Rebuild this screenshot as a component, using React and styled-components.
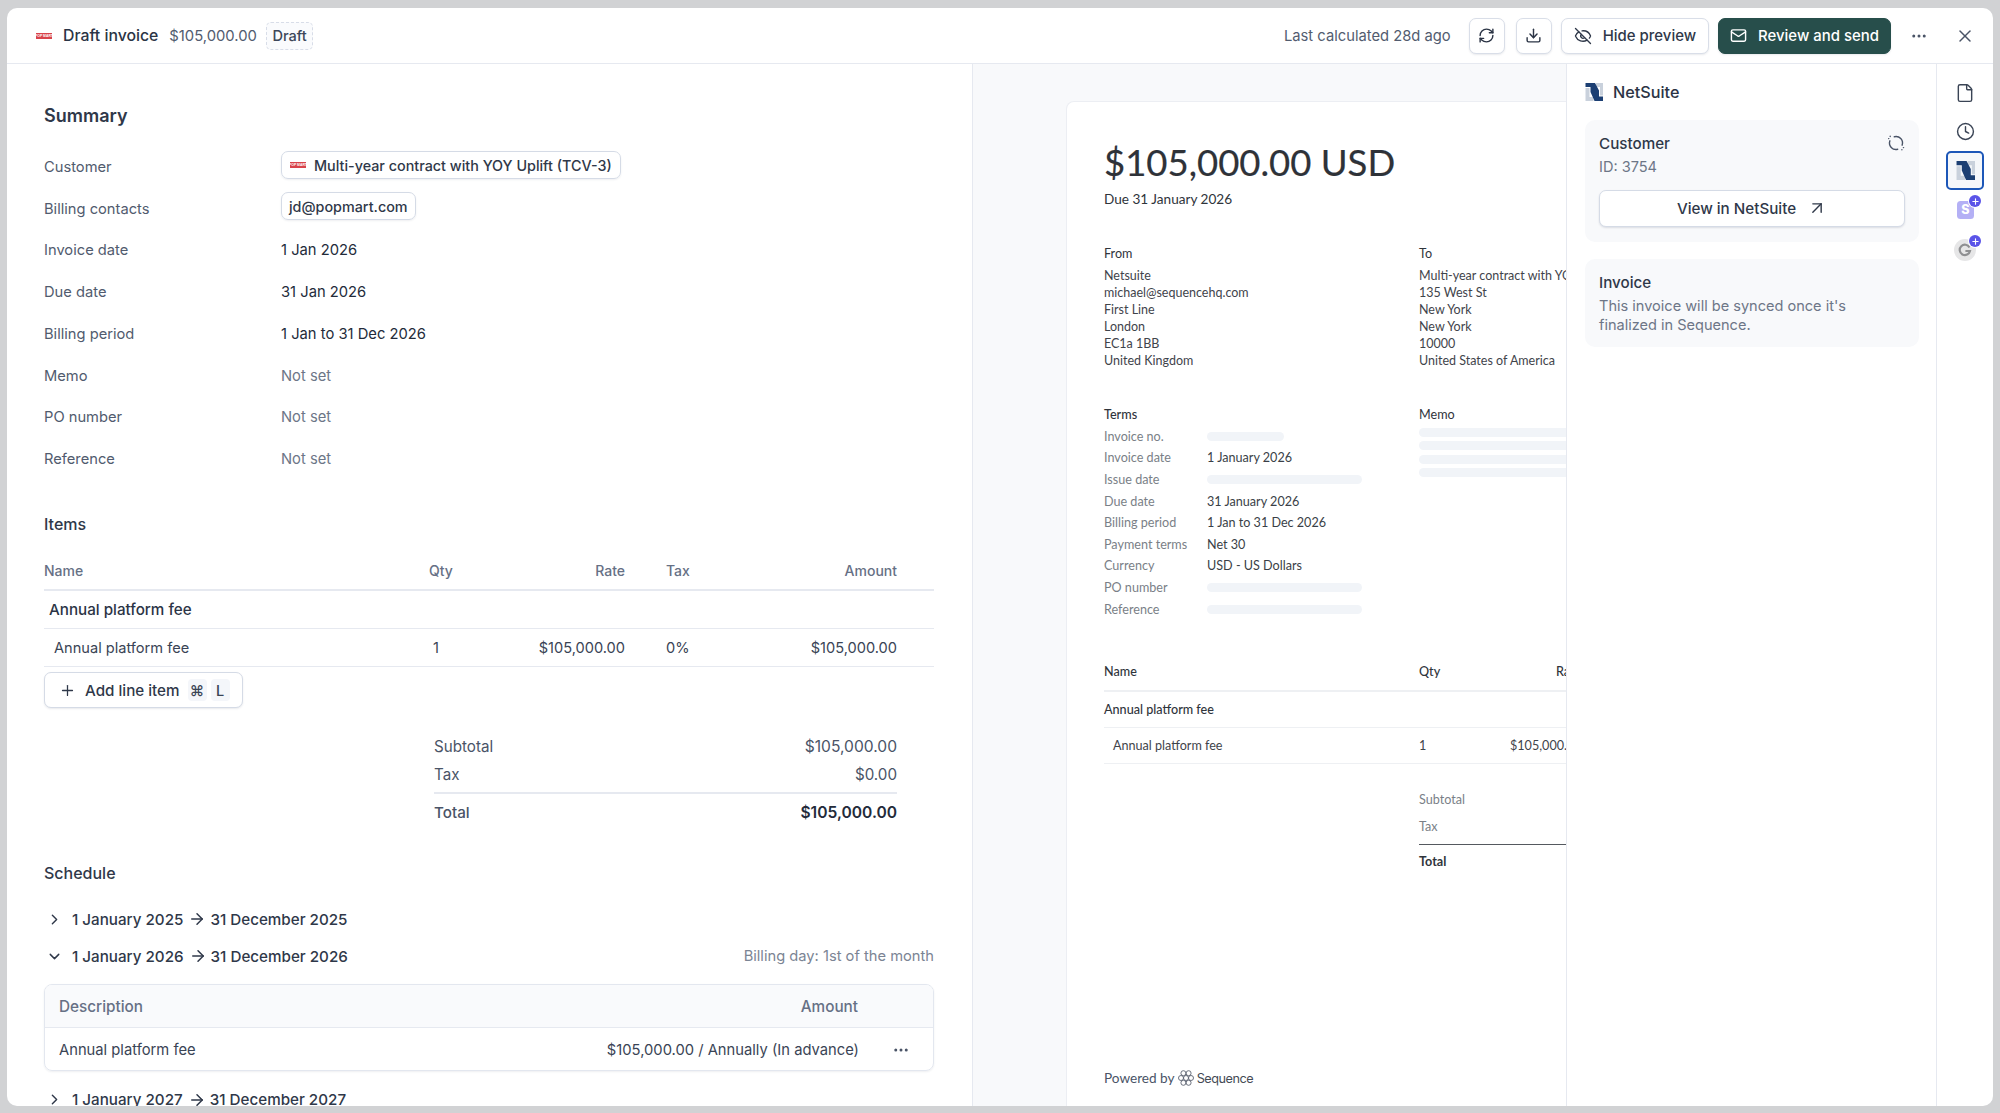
import React from 'react';
import styled, { createGlobalStyle } from 'styled-components';
import { RefreshCw, Download, EyeOff, Mail, Ellipsis, X, File, Clock, ArrowUpRight, ChevronRight, ChevronDown, ArrowRight, Plus } from 'lucide-react';

const Global = createGlobalStyle`
  html, body { margin: 0; padding: 0; background: #d1d2d4; }
  body { font-family: Inter, "Liberation Sans", sans-serif; color: #2b3445; -webkit-font-smoothing: antialiased; }
  * { box-sizing: border-box; }
`;

const Page = styled.div`
  width: 2000px; height: 1113px; padding: 8px 7px 7px 7px; overflow: hidden;
`;
const Panel = styled.div`
  height: 100%; background: #fff; border-radius: 10px; overflow: hidden; display: flex; flex-direction: column;
`;
const Header = styled.header`
  height: 56px; flex: none; display: flex; align-items: center; border-bottom: 1px solid #e6e9f0;
  padding: 0 18px 0 29px;
`;
const TitleText = styled.span`
  font-size: 15.8px; font-weight: 500; color: #2b3445; margin-left: 11px;
`;
const TitleAmount = styled.span`
  font-size: 14.8px; color: #525c6f; margin-left: 11px;
`;
const DraftTag = styled.span`
  height: 28px; padding: 0 5.5px; margin-left: 9px; display: inline-flex; align-items: center;
  border: 1.5px dashed #d8dde8; border-radius: 5px; background: #fafbfd;
  font-size: 14.6px; font-weight: 500; color: #3d4759;
`;
const Spacer = styled.div`flex: 1;`;
const LastCalc = styled.span`
  font-size: 14.75px; color: #525c6f; margin-right: 18px;
`;
const IconButton = styled.button`
  width: 36px; height: 36px; padding: 0; margin-right: ${p => p.$mr}px; display: flex; align-items: center; justify-content: center;
  background: #fff; border: 1px solid #d9dee8; border-radius: 7px; box-shadow: 0 1px 2px rgba(40,50,80,.1); color: #2b3445;
`;
const TextButton = styled.button`
  height: 36px; padding: 0 ${p => p.$px || 11}px; display: flex; align-items: center; gap: 11px; margin-right: ${p => p.$mr || 0}px;
  background: ${p => p.$primary ? '#274e4b' : '#fff'};
  border: 1px solid ${p => p.$primary ? '#274e4b' : '#d9dee8'};
  border-radius: 7px; box-shadow: 0 1px 2px rgba(40,50,80,.1);
  color: ${p => p.$primary ? '#fff' : '#2f3849'};
  font: 500 14.95px Inter, sans-serif;
`;
const PlainIcon = styled.span`
  display: flex; color: ${p => p.$color || '#4a5467'}; margin: ${p => p.$m || 0};
`;

const Body = styled.div`
  flex: 1; min-height: 0; display: flex;
`;
const Main = styled.main`
  width: 966px; flex: none; padding: 40px 38px 0 37px; border-right: 1px solid #e6e9f0; overflow: hidden;
`;
const H1 = styled.h2`
  margin: 0; font-size: 18px; line-height: 24px; font-weight: 600; color: #2f3849;
`;
const H2 = styled.h3`
  margin: ${p => p.$mt}px 0 0; font-size: 16px; line-height: 22px; font-weight: 500; color: #2f3849;
`;
const SummaryGrid = styled.div`
  margin-top: 18px; display: grid; grid-template-columns: 237px 1fr; grid-auto-rows: 41.75px; align-items: center;
`;
const Label = styled.div`
  font-size: 14.7px; color: #515b6e;
`;
const Value = styled.div`
  font-size: 14.75px; color: ${p => p.$muted ? '#6d7687' : '#232b3a'};
`;
const Pill = styled.span`
  height: 28px; padding: 0 ${p => p.$px || 8}px; display: inline-flex; align-items: center; gap: 8px;
  border: 1px solid #d5dbe6; border-radius: 7px; box-shadow: 0 1px 2px rgba(40,50,80,.08);
  font-size: 14.35px; font-weight: 500; color: #2f3849;
  margin-top: -5px;
`;

const ItemsTable = styled.div`
  margin-top: 17px;
`;
const ItemRow = styled.div`
  display: grid; grid-template-columns: 385px 90px 106px 100px 1fr; align-items: center;
  height: ${p => p.$h}px; border-bottom: ${p => p.$thick ? '2px' : '1px'} solid #e6e9f0;
  font-size: ${p => p.$head ? 14 : 14.6}px; color: ${p => p.$head ? '#667085' : '#3a4455'};
  font-weight: ${p => (p.$head || p.$bold) ? 500 : 400};
  ${p => p.$bold ? 'color:#2b3445;font-size:15.2px;' : ''}
`;
const Cell = styled.div`
  text-align: ${p => p.$right ? 'right' : 'left'};
  padding-left: ${p => p.$pl || 0}px; padding-right: ${p => p.$pr || 0}px;
`;
const AddButton = styled.button`
  margin-top: 5px; height: 36px; width: 199px; padding: 0 0 0 14px; display: flex; align-items: center;
  background: #fff; border: 1px solid #d5dbe6; border-radius: 7px; box-shadow: 0 1px 2px rgba(40,50,80,.1);
  font: 500 15.2px Inter, sans-serif; color: #2f3849;
`;
const AddLabel = styled.span`margin-left: 9px;`;
const Kbd = styled.kbd`
  width: 19px; height: 22px; margin-left: ${p => p.$ml}px; display: inline-flex; align-items: center; justify-content: center;
  background: #f4f6fa; border-radius: 4px; font: 500 14.5px Inter, "DejaVu Sans", sans-serif; color: #3a4455;
`;
const Totals = styled.div`
  margin: 24px 37px 0 390px;
`;
const TotalRow = styled.div`
  height: ${p => p.$h}px; display: flex; justify-content: space-between; align-items: center;
  font-size: ${p => p.$bold ? 15.6 : 15.2}px; color: ${p => p.$bold ? '#232b3a' : '#4a5467'}; font-weight: ${p => p.$bold ? 600 : 400};
  ${p => p.$line ? 'border-top: 2px solid #e6e9f0; margin-top: 4px; padding-top: 2px;' : ''}
`;
const SubtotalAmount = styled.span`font-size: 15.6px;`;
const TotalLabel = styled.span`font-weight: ${p => p.$b ? 500 : 400}; font-size: 15.2px; color: #4a5467;`;
const Period = styled.div`
  height: 37px; display: flex; align-items: center; font-size: 15.2px; font-weight: 500; color: #2f3849; padding-left: 2px;
  margin-top: ${p => p.$mt || 0}px;
`;
const DateArrow = styled.span`display: inline-flex; margin: 0 4px 0 5px; color: #2f3849;`;
const BillingDay = styled.span`margin-left: auto; font-size: 14.7px; font-weight: 400; color: #7b8494;`;
const ChevronSlot = styled.span`display: flex; width: 26px; color: #2f3849;`;
const SchedCard = styled.div`
  margin-top: 9.5px; height: 87px; border: 1px solid #e3e7ef; border-radius: 8px; overflow: hidden;
  box-shadow: 0 1px 2px rgba(40,50,80,.08);
`;
const SchedHead = styled.div`
  height: 43px; background: #f9fafc; border-bottom: 1px solid #e6e9f0; display: flex; justify-content: space-between; align-items: center;
  padding: 0 75px 0 14px; font-size: 15.3px; font-weight: 500; color: #667085;
`;
const SchedRow = styled.div`
  height: 43px; display: flex; align-items: center; padding: 0 23px 0 14px; font-size: 14.75px; color: #3a4455;
`;
const SchedAmt = styled.span`margin-left: auto; margin-right: 33px;`;

const Preview = styled.section`
  width: 593px; flex: none; background: #f8f9fb; overflow: hidden; padding: 37px 0 0 93px; display: flex;
`;
const Paper = styled.div`
  width: 800px; flex: none; background: #fff; border: 1px solid #eceef3; border-bottom: 0; border-radius: 8px 8px 0 0; padding: 36px 36px 18px 37px;
  display: flex; flex-direction: column; font-family: Lato, sans-serif; color: #3a3f47; font-size: 12.6px;
`;
const BigAmount = styled.div`
  font-size: 36.5px; line-height: 48px; color: #2e3238; white-space: nowrap; -webkit-text-stroke: 0.2px #2e3238;
`;
const DueLine = styled.div`
  margin-top: 3px; font-size: 13.6px; line-height: 20px; color: #2f343b;
`;
const PaperTwo = styled.div`
  display: grid; grid-template-columns: 315px 1fr; margin-top: ${p => p.$mt}px;
`;
const PaperHeading = styled.div`
  font-size: 12.6px; line-height: 17px; color: #2f343b; font-weight: ${p => p.$b ? 500 : 400};
`;
const AddressLines = styled.div`
  margin-top: 5px; line-height: 17.1px; white-space: nowrap; font-size: 12.5px; color: #3f444b;
`;
const TermsGrid = styled.div`
  margin-top: 3px; display: grid; grid-template-columns: 103px 1fr; grid-auto-rows: 21.6px; align-items: center; white-space: nowrap;
`;
const TermLabel = styled.div`color: #7a7f87;`;
const Skeleton = styled.div`
  height: 9px; border-radius: 5px; background: #f1f4f8; width: ${p => p.$w}px;
`;
const MemoLines = styled.div`
  margin-top: 5px; display: grid; gap: 4.6px;
`;
const PaperRow = styled.div`
  display: grid; grid-template-columns: 315px 91px 170px; align-items: center; height: ${p => p.$h}px;
  border-bottom: ${p => p.$thick ? 2 : 1.5}px solid #eef0f3; white-space: nowrap;
  color: ${p => p.$strong ? '#2f343b' : '#3f444b'}; font-weight: ${p => p.$strong ? 500 : 400};
  margin-top: ${p => p.$mt || 0}px;
`;
const PaperCell = styled.div`
  margin-left: ${p => p.$ml || 0}px;
`;
const PaperTotals = styled.div`margin: 22px 0 0 315px; `;
const PaperTotal = styled.div`
  height: ${p => p.$h}px; display: flex; align-items: center; color: ${p => p.$strong ? '#2f343b' : '#7a7f87'}; font-weight: ${p => p.$strong ? 700 : 400};
  ${p => p.$line ? 'border-top: 1.5px solid #55595f; margin-top: 4px;' : ''}
`;
const Powered = styled.div`
  margin-top: auto; height: 20px; display: flex; align-items: center; font-size: 13.6px; color: #4a5467;
`;
const SeqName = styled.span`
  font-family: Inter, sans-serif; font-size: 12.7px; letter-spacing: -0.5px; color: #444b55; margin-left: 3px;
`;

const Side = styled.aside`
  width: 371px; flex: none; border-left: 1px solid #e6e9f0; padding: 18px 18px 0 18px;
`;
const SideTitle = styled.div`
  height: 20px; display: flex; align-items: center; gap: 10px; font-size: 16.2px; font-weight: 500; color: #2b3445;
`;
const SideCard = styled.div`
  margin-top: ${p => p.$mt}px; height: ${p => p.$h}px; background: #f8f9fb; border-radius: 10px; padding: 12px 14px 0;
`;
const CardTitleRow = styled.div`
  display: flex; justify-content: space-between; align-items: center; height: 22px;
  font-size: 15.2px; font-weight: 500; color: #2f3849;
`;
const CardText = styled.div`
  margin-top: ${p => p.$mt || 0}px; font-size: 14.55px; line-height: 18.5px; color: #6d7687;
`;
const WideButton = styled.button`
  margin-top: 13px; width: 100%; height: 37px; display: flex; align-items: center; justify-content: center; gap: 11px;
  background: #fff; border: 1px solid #d5dbe6; border-radius: 7px; box-shadow: 0 1px 2px rgba(40,50,80,.14);
  font: 500 15.2px Inter, sans-serif; color: #2f3849;
`;
const Rail = styled.nav`
  width: 57px; flex: none; border-left: 1px solid #e6e9f0; padding-top: 9px; display: flex; flex-direction: column; align-items: center; margin-left: -1px;
`;
const RailSlot = styled.div`
  position: relative; width: 38px; height: ${p => p.$h || 39}px; display: flex; align-items: center; justify-content: center; color: #3a4455;
  ${p => p.$active ? 'background:#f5f7fa;border:2px solid #1d57b8;border-radius:5px;' : ''}
`;
const PlusBadge = styled.span`
  position: absolute; right: 3px; top: ${p => p.$top}px; width: 12px; height: 12px; border-radius: 50%; background: #5b54e8; color: #fff;
  display: flex; align-items: center; justify-content: center; box-shadow: 0 0 0 1px #fff;
`;

const PopMart = () => (
  <svg width="16" height="6" viewBox="0 0 16 6"><rect width="16" height="6" fill="#d8434b" /><text x="8" y="4.2" fontSize="3.4" fill="#fff" textAnchor="middle" fontFamily="Liberation Sans" fontWeight="700">POP MART</text></svg>
);
const NetSuiteLogo = ({ size = 18 }) => (
  <svg width={size} height={size} viewBox="0 0 18 18">
    <path d="M0.5 5H4.5V14H8.5V18H0.5Z" fill="#c9d1dc" />
    <path d="M11 0H18V12.5H15V4H11Z" fill="#c9d1dc" />
    <path d="M0.5 0H10L14 7.5V13.5H18V18H9.5L5.5 9V4H0.5Z" fill="#1c3f73" />
  </svg>
);
const SequenceMark = () => (
  <svg width="16" height="16" viewBox="0 0 16 16" fill="none" stroke="#5b6270" strokeWidth="0.9">
    <circle cx="5.4" cy="3.2" r="2.5" /><circle cx="10.6" cy="3.2" r="2.5" />
    <circle cx="3" cy="8" r="2.5" /><circle cx="13" cy="8" r="2.5" />
    <circle cx="5.4" cy="12.8" r="2.5" /><circle cx="10.6" cy="12.8" r="2.5" />
    <circle cx="8" cy="8" r="2.5" />
  </svg>
);
const UnlinkLoop = () => (
  <svg width="18" height="18" viewBox="0 0 18 18" fill="none" stroke="#4a5467" strokeWidth="1.4" strokeLinecap="round">
    <path d="M7.3 2.7A6.5 6.5 0 0 1 15.1 11.2" />
    <path d="M10.7 15.3A6.5 6.5 0 0 1 2.9 6.8" />
    <path d="M3.2 2.3v.2M1.6 4.6h.2M14.9 15.6v.2M16.4 13.6h.2" />
  </svg>
);
const StripeTile = () => (
  <svg width="17" height="18" viewBox="0 0 17 18"><rect width="17" height="18" rx="3.5" fill="#b4b0f5" /><text x="8.5" y="13.4" fontSize="12.5" fontWeight="800" fontFamily="Inter" fill="#fff" textAnchor="middle">S</text></svg>
);
const GTile = () => (
  <svg width="22" height="22" viewBox="0 0 22 22"><circle cx="11" cy="11" r="11" fill="#e6e6e7" /><path d="M15.5 8.4A5.2 5.2 0 1 0 16 12h-4.6" fill="none" stroke="#8f9092" strokeWidth="2.2" /></svg>
);

const rows = [
  ['Invoice date', '1 Jan 2026'], ['Due date', '31 Jan 2026'], ['Billing period', '1 Jan to 31 Dec 2026'],
  ['Memo', 'Not set', true], ['PO number', 'Not set', true], ['Reference', 'Not set', true],
];
const terms = [
  ['Invoice no.', null, 77], ['Invoice date', '1 January 2026'], ['Issue date', null, 155], ['Due date', '31 January 2026'],
  ['Billing period', '1 Jan to 31 Dec 2026'], ['Payment terms', 'Net 30'], ['Currency', 'USD - US Dollars'],
  ['PO number', null, 155], ['Reference', null, 155],
];

const PeriodRow = ({ open, start, end, mt, children }) => (
  <Period $mt={mt}>
    <ChevronSlot>{open ? <ChevronDown size={17} strokeWidth={2} /> : <ChevronRight size={17} strokeWidth={2} />}</ChevronSlot>
    {start}<DateArrow><ArrowRight size={18} strokeWidth={2} /></DateArrow>{end}
    {children}
  </Period>
);

export default function App() {
  return (
    <Page>
      <Global />
      <Panel>
        <Header>
          <PopMart />
          <TitleText>Draft invoice</TitleText>
          <TitleAmount>$105,000.00</TitleAmount>
          <DraftTag>Draft</DraftTag>
          <Spacer />
          <LastCalc>Last calculated 28d ago</LastCalc>
          <IconButton $mr={11}><RefreshCw size={17} strokeWidth={2} /></IconButton>
          <IconButton $mr={9}><Download size={17} strokeWidth={2} /></IconButton>
          <TextButton $mr={9} $px={12}><EyeOff size={18} strokeWidth={1.8} />Hide preview</TextButton>
          <TextButton $primary><Mail size={17} strokeWidth={2} />Review and send</TextButton>
          <PlainIcon $m="0 0 0 19px"><Ellipsis size={18} /></PlainIcon>
          <PlainIcon $m="0 0 0 27px"><X size={20} strokeWidth={1.8} /></PlainIcon>
        </Header>
        <Body>
          <Main>
            <H1>Summary</H1>
            <SummaryGrid>
              <Label>Customer</Label>
              <Value><Pill><PopMart />Multi-year contract with YOY Uplift (TCV-3)</Pill></Value>
              <Label>Billing contacts</Label>
              <Value><Pill $px={7}>jd@popmart.com</Pill></Value>
              {rows.map(([l, v, m]) => (
                <React.Fragment key={l}><Label>{l}</Label><Value $muted={m}>{v}</Value></React.Fragment>
              ))}
            </SummaryGrid>
            <H2 $mt={33}>Items</H2>
            <ItemsTable>
              <ItemRow $h={39} $thick $head>
                <Cell>Name</Cell><Cell>Qty</Cell><Cell $right>Rate</Cell><Cell $pl={41}>Tax</Cell><Cell $right $pr={37}>Amount</Cell>
              </ItemRow>
              <ItemRow $h={38} $bold><Cell $pl={5}>Annual platform fee</Cell></ItemRow>
              <ItemRow $h={38}>
                <Cell $pl={10}>Annual platform fee</Cell><Cell $pl={4}>1</Cell><Cell $right>$105,000.00</Cell><Cell $pl={41}>0%</Cell><Cell $right $pr={37}>$105,000.00</Cell>
              </ItemRow>
            </ItemsTable>
            <AddButton>
              <Plus size={17} strokeWidth={1.8} />
              <AddLabel>Add line item</AddLabel>
              <Kbd $ml={8}>⌘</Kbd><Kbd $ml={4}>L</Kbd>
            </AddButton>
            <Totals>
              <TotalRow $h={28}><span>Subtotal</span><SubtotalAmount>$105,000.00</SubtotalAmount></TotalRow>
              <TotalRow $h={28}><span>Tax</span><span>$0.00</span></TotalRow>
              <TotalRow $h={37} $line $bold><TotalLabel $b>Total</TotalLabel><span>$105,000.00</span></TotalRow>
            </Totals>
            <H2 $mt={32.5}>Schedule</H2>
            <PeriodRow mt={17} start="1 January 2025" end="31 December 2025" />
            <PeriodRow open start="1 January 2026" end="31 December 2026"><BillingDay>Billing day: 1st of the month</BillingDay></PeriodRow>
            <SchedCard>
              <SchedHead><span>Description</span><span>Amount</span></SchedHead>
              <SchedRow>
                <span>Annual platform fee</span>
                <SchedAmt>$105,000.00 / Annually (In advance)</SchedAmt>
                <PlainIcon><Ellipsis size={18} /></PlainIcon>
              </SchedRow>
            </SchedCard>
            <PeriodRow mt={10} start="1 January 2027" end="31 December 2027" />
          </Main>
          <Preview>
            <Paper>
              <BigAmount>$105,000.00 USD</BigAmount>
              <DueLine>Due 31 January 2026</DueLine>
              <PaperTwo $mt={36}>
                <div>
                  <PaperHeading>From</PaperHeading>
                  <AddressLines>Netsuite<br />michael@sequencehq.com<br />First Line<br />London<br />EC1a 1BB<br />United Kingdom</AddressLines>
                </div>
                <div>
                  <PaperHeading>To</PaperHeading>
                  <AddressLines>Multi-year contract with YOY Uplift (TCV-3)<br />135 West St<br />New York<br />New York<br />10000<br />United States of America</AddressLines>
                </div>
              </PaperTwo>
              <PaperTwo $mt={36}>
                <div>
                  <PaperHeading $b>Terms</PaperHeading>
                  <TermsGrid>
                    {terms.map(([l, v, w]) => (
                      <React.Fragment key={l}><TermLabel>{l}</TermLabel>{v ? <div>{v}</div> : <Skeleton $w={w} />}</React.Fragment>
                    ))}
                  </TermsGrid>
                </div>
                <div>
                  <PaperHeading>Memo</PaperHeading>
                  <MemoLines><Skeleton $w={400} /><Skeleton $w={400} /><Skeleton $w={400} /><Skeleton $w={400} /></MemoLines>
                </div>
              </PaperTwo>
              <PaperRow $h={39} $thick $strong $mt={33.5}><PaperCell>Name</PaperCell><PaperCell>Qty</PaperCell><PaperCell $ml={46}>Rate</PaperCell></PaperRow>
              <PaperRow $h={36} $strong><PaperCell>Annual platform fee</PaperCell></PaperRow>
              <PaperRow $h={36}><PaperCell $ml={9}>Annual platform fee</PaperCell><PaperCell>1</PaperCell><PaperCell>$105,000.00</PaperCell></PaperRow>
              <PaperTotals>
                <PaperTotal $h={27}>Subtotal</PaperTotal>
                <PaperTotal $h={27}>Tax</PaperTotal>
                <PaperTotal $h={34} $line $strong>Total</PaperTotal>
              </PaperTotals>
              <Powered>Powered by&nbsp;<SequenceMark /><SeqName>Sequence</SeqName></Powered>
            </Paper>
          </Preview>
          <Side>
            <SideTitle><NetSuiteLogo />NetSuite</SideTitle>
            <SideCard $mt={18} $h={122}>
              <CardTitleRow>Customer<UnlinkLoop /></CardTitleRow>
              <CardText $mt={4}>ID: 3754</CardText>
              <WideButton>View in NetSuite<ArrowUpRight size={20} strokeWidth={1.7} /></WideButton>
            </SideCard>
            <SideCard $mt={17} $h={88}>
              <CardTitleRow>Invoice</CardTitleRow>
              <CardText $mt={4}>This invoice will be synced once it's<br />finalized in Sequence.</CardText>
            </SideCard>
          </Side>
          <Rail>
            <RailSlot><File size={20} strokeWidth={1.7} /></RailSlot>
            <RailSlot><Clock size={19} strokeWidth={1.8} /></RailSlot>
            <RailSlot $active><NetSuiteLogo size={19} /></RailSlot>
            <RailSlot $h={40}><StripeTile /><PlusBadge $top={5}><Plus size={9} strokeWidth={3} /></PlusBadge></RailSlot>
            <RailSlot $h={40}><GTile /><PlusBadge $top={5}><Plus size={9} strokeWidth={3} /></PlusBadge></RailSlot>
          </Rail>
        </Body>
      </Panel>
    </Page>
  );
}
